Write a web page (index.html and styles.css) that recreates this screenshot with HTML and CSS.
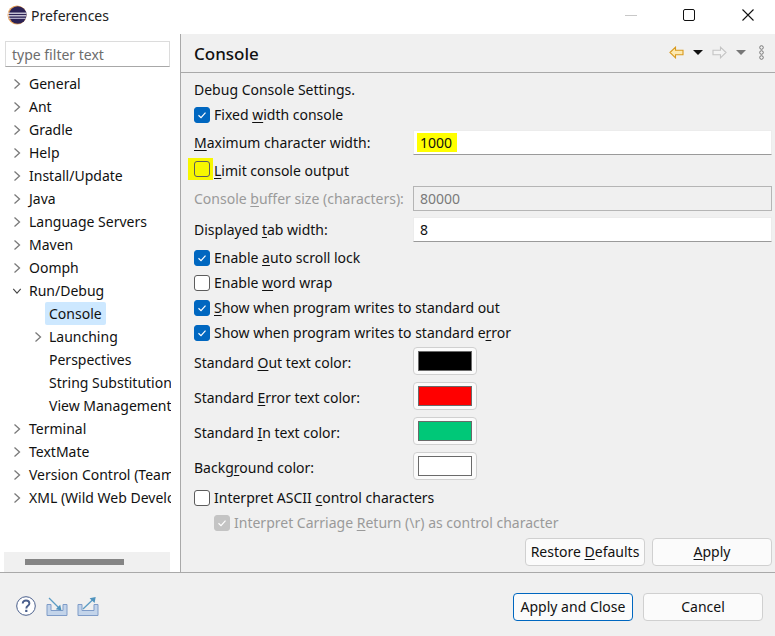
FILE: index.html
```html
<!DOCTYPE html>
<html lang="en">
<head>
    <meta charset="UTF-8">
    <title>Preferences</title>
    <link rel="stylesheet" href="styles.css">
</head>
<body>
<svg class="defs" width="0" height="0">
    <symbol id="chev-right" viewBox="0 0 10 12"><path d="M2.5 1.5 7.5 6 2.5 10.5" fill="none" stroke="#7a7a7a" stroke-width="1.3"/></symbol>
    <symbol id="chev-down" viewBox="0 0 12 10"><path d="M1.5 2.5 6 7.5 10.5 2.5" fill="none" stroke="#444" stroke-width="1.3"/></symbol>
    <symbol id="tick" viewBox="0 0 16 16"><path d="M4.5 8.3 7 10.6 11.5 5.6" fill="none" stroke="#fff" stroke-width="1.2"/></symbol>
</svg>

<header class="titlebar">
    <svg class="app-logo" viewBox="0 0 20 20" width="20" height="20">
        <circle cx="10" cy="10" r="9.5" fill="#e8a25a"/>
        <circle cx="10.8" cy="10" r="8.8" fill="#2c2255"/>
        <rect x="0.8" y="7.6" width="18.6" height="1.2" fill="#e9e6f2"/>
        <rect x="0.8" y="10.2" width="18.6" height="1.2" fill="#e9e6f2"/>
        <rect x="1.4" y="12.8" width="17.4" height="1" fill="#cfcbe2"/>
    </svg>
    <span class="app-title">Preferences</span>
    <div class="win-controls">
        <span class="win-btn"><span class="win-min"></span></span>
        <span class="win-btn"><span class="win-max"></span></span>
        <span class="win-btn win-close">
            <svg viewBox="0 0 12 12" width="12" height="12"><path d="M0.5 0.5 11.5 11.5M11.5 0.5 0.5 11.5" stroke="#111" stroke-width="1.1" fill="none"/></svg>
        </span>
    </div>
</header>

<div class="main">
    <aside class="sidebar">
        <div class="filter">type filter text</div>
        <ul class="tree">
            <li class="node"><svg class="chev"><use href="#chev-right"/></svg>General</li>
            <li class="node"><svg class="chev"><use href="#chev-right"/></svg>Ant</li>
            <li class="node"><svg class="chev"><use href="#chev-right"/></svg>Gradle</li>
            <li class="node"><svg class="chev"><use href="#chev-right"/></svg>Help</li>
            <li class="node"><svg class="chev"><use href="#chev-right"/></svg>Install/Update</li>
            <li class="node"><svg class="chev"><use href="#chev-right"/></svg>Java</li>
            <li class="node"><svg class="chev"><use href="#chev-right"/></svg>Language Servers</li>
            <li class="node"><svg class="chev"><use href="#chev-right"/></svg>Maven</li>
            <li class="node"><svg class="chev"><use href="#chev-right"/></svg>Oomph</li>
            <li class="node"><svg class="chev"><use href="#chev-down"/></svg>Run/Debug</li>
            <li class="node child"><span class="selected">Console</span></li>
            <li class="node child"><svg class="chev"><use href="#chev-right"/></svg>Launching</li>
            <li class="node child">Perspectives</li>
            <li class="node child">String Substitution</li>
            <li class="node child">View Management</li>
            <li class="node"><svg class="chev"><use href="#chev-right"/></svg>Terminal</li>
            <li class="node"><svg class="chev"><use href="#chev-right"/></svg>TextMate</li>
            <li class="node"><svg class="chev"><use href="#chev-right"/></svg>Version Control (Team)</li>
            <li class="node"><svg class="chev"><use href="#chev-right"/></svg>XML (Wild Web Developer)</li>
        </ul>
        <div class="hscroll"><div class="hthumb"></div></div>
    </aside>

    <section class="pane">
        <div class="pane-head">
            <h1 class="pane-title">Console</h1>
            <div class="pane-tools">
                <svg viewBox="0 0 15 13" width="15" height="13"><path d="M1 6.5 6.5 1.2V4.2H14V8.8H6.5V11.8Z" fill="#fde9b0" stroke="#d99a1e" stroke-width="1.1"/></svg>
                <span class="drop"></span>
                <svg viewBox="0 0 15 13" width="15" height="13"><path d="M14 6.5 8.5 1.2V4.2H1V8.8H8.5V11.8Z" fill="#f4f4f4" stroke="#c4c4c4" stroke-width="1.1"/></svg>
                <span class="drop drop-off"></span>
                <svg viewBox="0 0 5 15" width="5" height="15"><g fill="none" stroke="#777" stroke-width="1"><circle cx="2.5" cy="2.5" r="1.8"/><circle cx="2.5" cy="7.5" r="1.8"/><circle cx="2.5" cy="12.5" r="1.8"/></g></svg>
            </div>
        </div>

        <div class="form">
            <div class="row intro">Debug Console Settings.</div>
            <label class="row check"><span class="box on"><svg><use href="#tick"/></svg></span>Fixed <u>w</u>idth console</label>
            <div class="row field spaced-one">
                <span class="lbl"><u>M</u>aximum character width:</span>
                <div class="input input-marked"><span class="hl">1000</span></div>
            </div>
            <label class="row field"><span class="mark"><span class="box"></span></span><u>L</u>imit console output</label>
            <div class="row field off">
                <span class="lbl">Console <u>b</u>uffer size (characters):</span>
                <div class="input input-off">80000</div>
            </div>
            <div class="row field spaced">
                <span class="lbl">Displayed <u>t</u>ab width:</span>
                <div class="input">8</div>
            </div>
            <label class="row check spaced-small"><span class="box on"><svg><use href="#tick"/></svg></span>Enable <u>a</u>uto scroll lock</label>
            <label class="row check"><span class="box"></span>Enable <u>w</u>ord wrap</label>
            <label class="row check"><span class="box on"><svg><use href="#tick"/></svg></span><u>S</u>how when program writes to standard out</label>
            <label class="row check"><span class="box on"><svg><use href="#tick"/></svg></span>Show when program writes to standard e<u>r</u>ror</label>
            <div class="row color">
                <span class="lbl">Standard <u>O</u>ut text color:</span>
                <div class="color-btn"><span class="swatch swatch-black"></span></div>
            </div>
            <div class="row color">
                <span class="lbl">Standard <u>E</u>rror text color:</span>
                <div class="color-btn"><span class="swatch swatch-red"></span></div>
            </div>
            <div class="row color">
                <span class="lbl">Standard <u>I</u>n text color:</span>
                <div class="color-btn"><span class="swatch swatch-green"></span></div>
            </div>
            <div class="row color">
                <span class="lbl">Backg<u>r</u>ound color:</span>
                <div class="color-btn"><span class="swatch swatch-white"></span></div>
            </div>
            <label class="row check"><span class="box"></span>Interpret ASCII <u>c</u>ontrol characters</label>
            <label class="row check sub off"><span class="box box-off"><svg><use href="#tick"/></svg></span>Interpret Carriage <u>R</u>eturn (\r) as control character</label>
        </div>

        <div class="pane-btns">
            <button class="btn">Restore <u>D</u>efaults</button>
            <button class="btn"><u>A</u>pply</button>
        </div>
    </section>
</div>

<footer class="footer">
    <div class="foot-icons">
        <svg viewBox="0 0 20 20" width="20" height="20">
            <circle cx="10" cy="10" r="9.3" fill="#fff" stroke="#4a5f8c" stroke-width="1"/>
            <path d="M6.7 7.6C6.7 5.6 8.2 4.5 10 4.5 12 4.5 13.4 5.7 13.4 7.4 13.4 9.8 10.3 9.8 10.3 12.4" fill="none" stroke="#4a5f8c" stroke-width="1.9"/>
            <rect x="9.2" y="13.8" width="2.2" height="2.2" fill="#4a5f8c"/>
        </svg>
        <svg viewBox="0 0 22 20" width="22" height="20">
            <path d="M1 8.5H5V14.5H17V8.5H21V19.5H1Z" fill="#c3d4ea" stroke="#7f9cc8" stroke-width="1"/>
            <path d="M3 2 14 13" stroke="#5b9cc4" stroke-width="1.3" fill="none"/>
            <path d="M15.5 14.5 9.8 13.2 14.2 8.8Z" fill="#4f93bd"/>
        </svg>
        <svg class="foot-export" viewBox="0 0 22 20" width="22" height="20">
            <path d="M1 8.5H5V14.5H17V8.5H21V19.5H1Z" fill="#c3d4ea" stroke="#7f9cc8" stroke-width="1"/>
            <path d="M6 13 17 2.5" stroke="#5b9cc4" stroke-width="1.3" fill="none"/>
            <path d="M18.7 1 12.6 2.2 17.6 7Z" fill="#4f93bd"/>
        </svg>
    </div>
    <div class="foot-btns">
        <button class="btn btn-default">Apply and Close</button>
        <button class="btn">Cancel</button>
    </div>
</footer>
</body>
</html>
```

FILE: styles.css
```css
* {
    box-sizing: border-box;
}

body {
    margin: 0;
    width: 775px;
    height: 636px;
    overflow: hidden;
    display: flex;
    flex-direction: column;
    background: #f0f0f0;
    color: #111;
    font-family: "Noto Sans", Arial, sans-serif;
    font-size: 14px;
}

.defs {
    display: none;
}

u {
    text-underline-offset: 2px;
}

/* title bar */
.titlebar {
    height: 34px;
    flex: none;
    display: flex;
    align-items: center;
    background: #fff;
    padding: 0 0 4px 7px;
}

.app-logo {
    margin-right: 4px;
}

.app-title {
    color: #222;
}

.win-controls {
    margin-left: auto;
    display: flex;
    padding-right: 21px;
    gap: 46px;
}

.win-btn {
    width: 12px;
    height: 12px;
    display: flex;
    align-items: center;
}

.win-close {
    margin-left: 1px;
}

.win-min {
    width: 12px;
    height: 1px;
    background: #c8c8c8;
}

.win-max {
    width: 12px;
    height: 12px;
    border: 1.5px solid #111;
    border-radius: 2px;
}

/* left tree */
.main {
    height: 539px;
    flex: none;
    display: flex;
    border-bottom: 1px solid #a9a9a9;
}

.sidebar {
    width: 181px;
    flex: none;
    background: #fff;
    border-right: 1px solid #a9a9a9;
    display: flex;
    flex-direction: column;
    overflow: hidden;
    padding-top: 7px;
}

.filter {
    width: 165px;
    height: 26px;
    margin-left: 5px;
    padding: 0 6px;
    line-height: 26px;
    color: #6d6d6d;
    border: 1px solid #dcdcdc;
    border-bottom-color: #a8a8a8;
}

.tree {
    list-style: none;
    margin: 5px 0 0;
    padding: 0;
    width: 171px;
    flex: 1;
    overflow: hidden;
}

.node {
    height: 23px;
    line-height: 23px;
    padding-left: 29px;
    position: relative;
    white-space: nowrap;
    overflow: hidden;
}

.child {
    padding-left: 49px;
}

.chev {
    position: absolute;
    left: 12px;
    top: 6px;
    width: 10px;
    height: 12px;
}

.child .chev {
    left: 33px;
}

.selected {
    display: inline-block;
    height: 23px;
    margin-left: -4px;
    padding: 0 4px;
    background: #cde8ff;
    border-radius: 2px;
}

.hscroll {
    width: 166px;
    height: 20px;
    margin-left: 4px;
    flex: none;
    background: #f0f0f0;
    padding: 7px 0 0 21px;
}

.hthumb {
    width: 99px;
    height: 6px;
    background: #858585;
}

/* right pane */
.pane {
    flex: 1;
    display: flex;
    flex-direction: column;
}

.pane-head {
    height: 39px;
    flex: none;
    display: flex;
    align-items: center;
    padding: 0 11px 0 13px;
    border-bottom: 1px solid #a9a9a9;
}

.pane-title {
    margin: 1px 0 0;
    font-size: 17px;
    font-weight: 500;
    color: #111;
}

.pane-tools {
    margin-left: auto;
    display: flex;
    align-items: center;
    padding-bottom: 2px;
}

.drop {
    width: 0;
    height: 0;
    margin: 0 9px;
    border-left: 5px solid transparent;
    border-right: 5px solid transparent;
    border-top: 5px solid #111;
}

.drop-off {
    border-top-color: #777;
    margin-right: 13px;
}

.form {
    padding: 4px 0 0 13px;
    flex: 1;
}

.row {
    display: flex;
    align-items: center;
    white-space: pre;
}

.intro {
    height: 25px;
}

.check {
    height: 25px;
}

.field {
    height: 28px;
}

.spaced {
    margin-top: 3px;
}

.spaced-small {
    margin-top: 2px;
}

.spaced-one {
    margin-top: 1px;
}

.color {
    height: 35px;
}

.lbl {
    width: 219px;
    flex: none;
}

.off {
    color: #9a9a9a;
}

.sub {
    padding-left: 20px;
}

.box {
    width: 16px;
    height: 16px;
    flex: none;
    margin-right: 4px;
    border: 1px solid #5c5c5c;
    border-radius: 3px;
    background: #fff;
}

.box svg {
    display: block;
    width: 16px;
    height: 16px;
    margin: -1px;
}

.box.on {
    background: #0067c0;
    border-color: #0067c0;
}

.box-off {
    background: #c4c4c4;
    border-color: #c4c4c4;
}

.mark {
    display: flex;
    margin: 0 1px 2px -6px;
    padding: 3px 3px 3px 6px;
    background: #f7f700;
}

.mark .box {
    margin: 0;
    background: transparent;
}

.input {
    width: 359px;
    height: 25px;
    padding-left: 6px;
    line-height: 23px;
    background: #fff;
    border: 1px solid #ececec;
    border-bottom-color: #9a9a9a;
    color: #111;
}

.input-marked {
    padding: 2px 0 0 3px;
}

.input-off {
    background: #f0f0f0;
    border: 1px solid #b5b5b5;
    color: #7a7a7a;
}

.hl {
    display: block;
    width: 40px;
    height: 19px;
    line-height: 19px;
    padding-left: 3px;
    background: #ffff00;
}

.color-btn {
    width: 64px;
    height: 28px;
    margin-bottom: 3px;
    padding: 3px 4px;
    background: #fbfbfb;
    border: 1px solid #d0d0d0;
    border-radius: 4px;
}

.swatch {
    display: block;
    height: 20px;
    border: 1px solid #6a6a6a;
}

.swatch-black {
    background: #000;
}

.swatch-red {
    background: #ff0000;
}

.swatch-green {
    background: #00c878;
}

.swatch-white {
    background: #fff;
}

.pane-btns {
    display: flex;
    justify-content: flex-end;
    gap: 7px;
    padding: 0 3px 6px 0;
}

.btn {
    width: 120px;
    height: 28px;
    padding: 0 0 2px;
    font: inherit;
    color: #111;
    background: #fbfbfb;
    border: 1px solid #d0d0d0;
    border-radius: 4px;
}

.btn-default {
    border-color: #0067c0;
}

/* bottom bar */
.footer {
    flex: 1;
    display: flex;
    align-items: flex-start;
    justify-content: space-between;
    padding: 20px 12px 0 16px;
}

.foot-icons {
    display: flex;
    gap: 10px;
    padding-top: 3px;
}

.foot-export {
    margin-left: -1px;
}

.foot-btns {
    display: flex;
    gap: 10px;
}
```
